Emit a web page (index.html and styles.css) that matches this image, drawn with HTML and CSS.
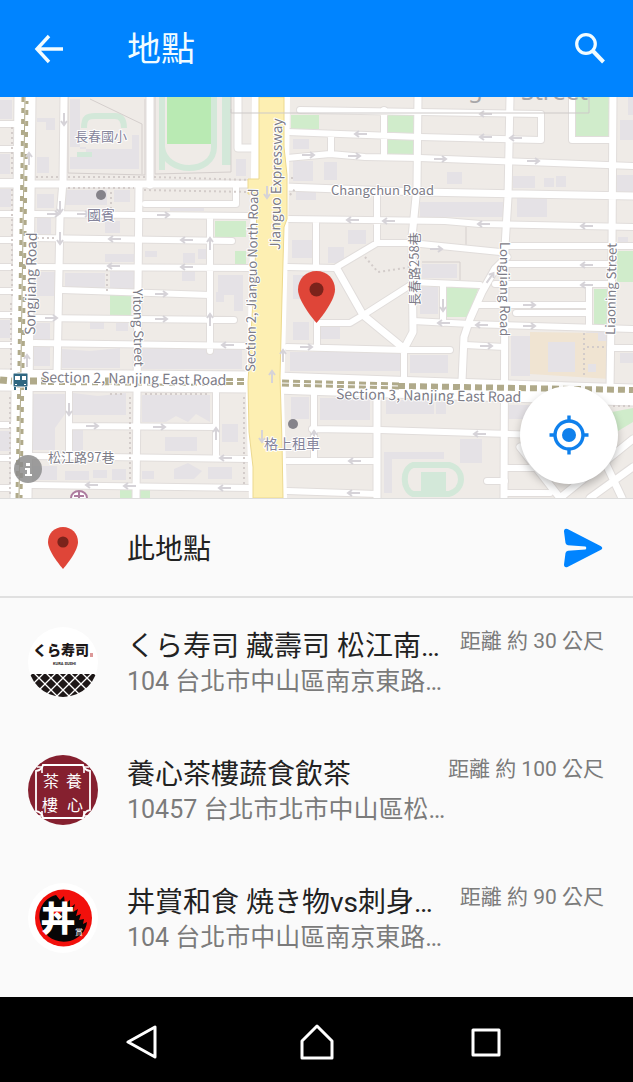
FILE: index.html
```html
<!DOCTYPE html>
<html lang="zh-Hant">
<head>
    <meta charset="UTF-8">
    <meta name="viewport" content="width=device-width, initial-scale=1.0">
    <title>地點</title>
    <link rel="stylesheet" href="styles.css">
</head>
<body>
    <header class="app-bar">
        <button class="icon-button" aria-label="返回">
            <svg width="30" height="30" viewBox="0 0 30 30" fill="none" stroke="currentColor" stroke-width="3.4"><path d="M29 15H4M15 2L3 15l12 13"/></svg>
        </button>
        <h1 class="app-title">地點</h1>
        <button class="icon-button" aria-label="搜尋">
            <svg width="30" height="32" viewBox="0 0 30 32" fill="none" stroke="currentColor"><circle cx="11" cy="11" r="9.300" stroke-width="3.200"/><path d="M17.500 17.500l11 11.500" stroke-width="4"/></svg>
        </button>
    </header>

    <section class="map">
        <svg class="map-canvas" viewBox="0 0 633 401" role="img" aria-label="地圖">
            <defs>
                <path id="roads-small" d="M0 27H14M0 52H14M0 85H14M0 117H14M0 143H14M0 170H14M0 194H14M0 218H14M0 248H14M0 328H12M0 361H12M0 391H12
                    M34 117L250 119M34 141L232 144M34 170L250 171M62 193L210 198M34 221L234 223M34 246L250 249M210 122V254
                    M145 107H236V90M69 290V357M216 296V361M69 329L216 330M32 359L250 362M31 388L250 391
                    M300 13L420 15L541 17V43M287 35L420 40L541 43M287 61L330 57L365 60L420 61L633 69M331 38V57M384 13V60
                    M287 122L445 124L480 127L633 130M377 95V146M316 124V170M287 170L335 171L377 146H411L500 155M505 149H633
                    M317 250V226H350L365 217L412 187M412 185L480 188M287 250L405 253H450M404 253V285M413 224L470 227L633 232M443 187V226
                    M572 0V43H613M507 167H612M495 187H612M478 208H586M516 216H586M589 187V230M465 248L505 250M610 251H633
                    M314 296V364M312 332L380 333L540 338M287 364H377M287 394L377 397M507 371H550M487 384H505M505 396H550"/>
                <path id="roads-medium" d="M64 0L63 85L60 120L57 278M150 0V88M139 88L136 401M238 0V51H256M0 87L250 87
                    M285 90L420 95L633 99M418 0L417 90L412 140L413 235L404 252M337 172L363 218L402 250
                    M507 160L495 172L482 195L470 222L464 240L462 284M510 0L508 100L505 150L504 401M613 0L612 150L610 292
                    M377 296V401M520 350L560 401M633 342L560 401M605 365L622 401M633 370L590 401"/>
                <path id="roads-large" d="M25 0L21 401M0 283L250 285L420 291L633 298"/>
                <path id="arrow" d="M-6 0H6M2 -3L6 0L2 3"/>
            </defs>

            <rect class="land" width="633" height="401"/>

            <!-- buildings -->
            <path class="building" d="M0 3h12v19H0zM0 57h10v20H0zM0 92h11v18H0zM37 21h18v12h-9v-8h-9zM37 60h12v16H37zM37 97h17v14H37zM37 121h14v16H37zM37 175h18v24H37z
                M70 2h10v50h52V38h7v34H70V60h16V50H70zM65 93h42v15H65zM114 93h16v12h-16zM105 124h15v12h-15zM105 157h30v8h-30zM65 176h40v17H65zM110 173h24v20h-24z
                M145 154h12v6h-12zM198 152h10v10h-10zM218 178h25v20h-25zM236 62h10v17h-10zM170 109h34v5h-34zM183 156h12v10h-12zM182 173h13v11h-13z
                M216 195h8v10h-8zM234 198h9v16h-9zM90 225h14v7H90zM116 226h12v8h-12zM62 252l28 2 30-3v20H62zM142 252l40-3 60 4v19H142zM34 226h16v43H34zM0 223h10v18H0z
                M33 297h32v20l-10 14v22H33zM73 296l25 3 28-3v22H73zM142 298h68v27l-14-8-8 8-12-6-10 6h-24zM165 340h32v14h-32zM73 332h10v22H73zM222 327h16v18h-16zM33 369h24v14H33zM65 374h24v9H65zM93 373h14v8H93zM112 372h14v11h-14zM142 374h12v8h-12zM174 372l14-6 14 8-8 8h-20zM208 370h24v12h-24zM0 334h10v20H0z
                M293 42h16v10h-16zM293 64h20v20h-20zM324 65h13v18h-13zM296 95h20v8h-20zM348 133h18v14h-18zM292 143h20v18h-20zM328 150h16v16h-16z
                M447 75h15v12h-15zM420 105h83v15h-83zM513 79h22v12h-22zM544 81h10v9h-10zM556 79h10v11h-10zM517 100h30v20h-30zM422 167h35v14h-35zM420 190h18v27h-18z
                M620 23h13v20h-13zM616 78h17v17h-17zM618 140h10v5h-10zM628 0h5v18h-5zM293 178h16v24h-16zM293 225h16v18h-16zM320 230h20v12h-20z
                M290 255h110v19H290zM410 258h38v18h-38zM511 239h19v40h-19zM586 235h22v12h-22zM620 256h13v10h-13z
                M291 300h18v22h-18zM320 301h50v22h-50zM386 303h48v14h-48zM436 305h10v12h-10zM507 308h30v14h-30zM384 355h60v7h-52v34h-8zM460 342h22v24h-22z"/>
            <path class="school" d="M530 235l68 1v8h12v38l-80-5z"/>
            <path class="building" d="M548 245h27v30h-27zM588 267h8v8h-8z"/>

            <!-- parks and running tracks -->
            <path class="park-strong" d="M167 0h47v47h-47z"/>
            <path class="park" d="M215 124h31v16h-31zM235 154h11v14h-11zM110 195h21v23h-21zM291 18h28v14h-28zM388 18h26v39h-26zM576 0h34v39h-34zM617 154h16v31h-16zM446 189h33l-10 31h-23zM594 192h14v36h-14zM612 315l21-4v14l-20 12zM120 393h30v8h-30z"/>
            <path class="pitch" d="M222 0h9v68h-9zM77 55h15v5H77zM421 375h25v19h-25z"/>
            <path class="track" d="M162 0V73M162 50C165 78 214 78 214 50V0M84 31C84 20 88 19 95 19H115C122 19 124 24 124 31"/>
            <path class="track" d="M413 368H449C465 372 465 392 449 397H413C402 392 402 372 413 368z"/>
            <path class="boundary" d="M68 0V76L145 78V2M90 2l52 25v50M155 0v77l76-2V12M466 130v20M422 165h38v18"/>

            <!-- streets: outline first, then fill -->
            <use href="#roads-small" class="road casing-small"/>
            <use href="#roads-medium" class="road casing-medium"/>
            <use href="#roads-large" class="road casing-large"/>
            <path class="road fill-express" d="M271 0L269 150L265 300L268 401"/>
            <use href="#roads-small" class="road fill-small"/>
            <use href="#roads-medium" class="road fill-medium"/>
            <use href="#roads-large" class="road fill-large"/>

            <!-- footpaths -->
            <path class="footpath" d="M36 80H60M68 80H146M154 80L250 83M68 91H134M144 93L250 95M111 95V112M12 30V78M12 92V200M11 206V276M10 300V400M130 300V385M244 300V390M107 172V194M37 141H55
                M292 80v4M290 98l5-6M365 160L378 175L412 170M584 236V280M587 250H606M613 309H633M110 297H124M145 297H210"/>

            <path class="expressway" d="M259 0H284V50L287 78V122L284 130L282 200L280 280L282 345L283 401H253V370L249 335L248 285L252 220L256 150L257 97H248V82H259z"/>

            <!-- metro lines -->
            <path class="metro-base" d="M25 0L19 401"/>
            <path class="metro-left" d="M23 0L17 401"/>
            <path class="metro-right" d="M27 4L21 401"/>
            <path class="metro-twin" d="M0 283L12 284M30 284L46 284M105 284H112M226 284.500H247M282 286L400 289"/>
            <path class="metro-gap" d="M226 284.500H247M282 286L400 289"/>
            <path class="metro-wide" d="M398 289L633 293"/>
            <path class="metro-thin" d="M48 287L226 288"/>

            <g class="arrows">
                <use href="#arrow" transform="translate(64 22) rotate(90)"/>
                <use href="#arrow" transform="translate(29 62) rotate(-90)"/>
                <use href="#arrow" transform="translate(60 110) rotate(90)"/>
                <use href="#arrow" transform="translate(60 141) rotate(90)"/>
                <use href="#arrow" transform="translate(53 117)"/>
                <use href="#arrow" transform="translate(83 117)"/>
                <use href="#arrow" transform="translate(163 118)"/>
                <use href="#arrow" transform="translate(115 142) rotate(180)"/>
                <use href="#arrow" transform="translate(187 143) rotate(180)"/>
                <use href="#arrow" transform="translate(114 169) rotate(180)"/>
                <use href="#arrow" transform="translate(187 170) rotate(180)"/>
                <use href="#arrow" transform="translate(210 147) rotate(-90)"/>
                <use href="#arrow" transform="translate(161 197)"/>
                <use href="#arrow" transform="translate(51 221)"/>
                <use href="#arrow" transform="translate(161 222)"/>
                <use href="#arrow" transform="translate(210 223) rotate(-90)"/>
                <use href="#arrow" transform="translate(228 248) rotate(180)"/>
                <use href="#arrow" transform="translate(27 264) rotate(-90)"/>
                <use href="#arrow" transform="translate(69 312) rotate(90)"/>
                <use href="#arrow" transform="translate(92 329)"/>
                <use href="#arrow" transform="translate(159 330)"/>
                <use href="#arrow" transform="translate(216 337) rotate(-90)"/>
                <use href="#arrow" transform="translate(226 361) rotate(180)"/>
                <use href="#arrow" transform="translate(92 388) rotate(180)"/>
                <use href="#arrow" transform="translate(130 389) rotate(180)"/>
                <use href="#arrow" transform="translate(225 391) rotate(180)"/>
                <use href="#arrow" transform="translate(267 95) rotate(90)"/>
                <use href="#arrow" transform="translate(272 280) rotate(-90)"/>
                <use href="#arrow" transform="translate(262 339) rotate(90)"/>
                <use href="#arrow" transform="translate(283 259) rotate(-90)"/>
                <use href="#arrow" transform="translate(361 37) rotate(180)"/>
                <use href="#arrow" transform="translate(308 58)"/>
                <use href="#arrow" transform="translate(354 59)"/>
                <use href="#arrow" transform="translate(353 123) rotate(180)"/>
                <use href="#arrow" transform="translate(389 124) rotate(180)"/>
                <use href="#arrow" transform="translate(486 17) rotate(180)"/>
                <use href="#arrow" transform="translate(486 40) rotate(180)"/>
                <use href="#arrow" transform="translate(516 41) rotate(180)"/>
                <use href="#arrow" transform="translate(440 62)"/>
                <use href="#arrow" transform="translate(533 64)"/>
                <use href="#arrow" transform="translate(484 127) rotate(180)"/>
                <use href="#arrow" transform="translate(587 129) rotate(180)"/>
                <use href="#arrow" transform="translate(436 152)"/>
                <use href="#arrow" transform="translate(587 168) rotate(180)"/>
                <use href="#arrow" transform="translate(587 188) rotate(180)"/>
                <use href="#arrow" transform="translate(490 181) rotate(-55)"/>
                <use href="#arrow" transform="translate(529 208)"/>
                <use href="#arrow" transform="translate(529 229)"/>
                <use href="#arrow" transform="translate(443 208) rotate(90)"/>
                <use href="#arrow" transform="translate(444 226) rotate(180)"/>
                <use href="#arrow" transform="translate(482 228) rotate(180)"/>
                <use href="#arrow" transform="translate(486 249)"/>
                <use href="#arrow" transform="translate(306 250)"/>
                <use href="#arrow" transform="translate(314 340) rotate(-90)"/>
                <use href="#arrow" transform="translate(355 364) rotate(180)"/>
                <use href="#arrow" transform="translate(354 396) rotate(180)"/>
                <use href="#arrow" transform="translate(480 337) rotate(180)"/>
            </g>

            <!-- street label cut off by the top edge -->
            <path class="label-frame" d="M231 0V16H589V0"/>
            <g class="label-cut">
                <text x="468" y="0">g</text>
                <text x="521" y="3">Street</text>
            </g>

            <g class="labels">
                <text class="label-small" x="331" y="98">Changchun Road</text>
                <text transform="translate(41 285) rotate(1)">Section 2, Nanjing East Road</text>
                <text transform="translate(336 302) rotate(1)">Section 3, Nanjing East Road</text>
                <text transform="translate(35 238) rotate(-89)">Songjiang Road</text>
                <text class="label-small" transform="translate(133 192) rotate(89)">Yitong Street</text>
                <text class="label-small" transform="translate(255 275) rotate(-89)">Section 2, Jianguo North Road</text>
                <text transform="translate(280 153) rotate(-89)">Jianguo Expressway</text>
                <text class="label-small" transform="translate(500 145) rotate(90)">Longjiang Road</text>
                <text class="label-small" transform="translate(615 238) rotate(-89)">Liaoning Street</text>
                <text class="label-small" transform="translate(419 209) rotate(-90)">長春路258巷</text>
                <text class="label-small" x="48" y="365">松江路97巷</text>
                <text class="label-place label-small" x="75" y="44">長春國小</text>
                <text class="label-place" x="87" y="123">國賓</text>
                <text class="label-place" x="264" y="352">格上租車</text>
            </g>
            <circle class="poi" cx="101" cy="98" r="5"/>
            <circle class="poi" cx="293" cy="327" r="5"/>

            <!-- metro station -->
            <rect class="station" x="13" y="276" width="15" height="14" rx="1"/>
            <path class="station-window" d="M15 279h5v4h-5zM22 279h4v4h-4zM15 287h2v1h-2zM24 287h2v1h-2z"/>
            <path class="station-legs" d="M15 290v3M26 290v3"/>
            <path class="landmark" d="M71 401a8 7 0 0 1 16 0M74 399h10M79 395v6"/>

            <circle class="info-disc" cx="28" cy="372" r="14"/>
            <path class="info-mark" d="M26 366h4v3h-4zM25 371h5v6h2v2h-7v-2h2v-4h-2z"/>

            <path class="pin" d="M316.500 174C306 174 298 182 298 192.500C298 205 316.500 226 316.500 226S335 205 335 192.500C335 182 327 174 316.500 174z"/>
            <circle class="pin-hole" cx="316.500" cy="192.500" r="7"/>
        </svg>
        <button class="locate-button" aria-label="我的位置">
            <svg width="40" height="40" viewBox="0 0 40 40" fill="none" stroke="currentColor"><circle cx="20" cy="20" r="14" stroke-width="3.4"/><circle cx="20" cy="20" r="7" fill="currentColor" stroke="none"/><path d="M20 0.500v5M20 34.500v5M0.500 20h5M34.500 20h5" stroke-width="3.400"/></svg>
        </button>
    </section>

    <section class="current-place">
        <div class="place-icon">
            <svg width="30" height="42" viewBox="0 0 30 42"><path class="pin" d="M15 0C6.500 0 0 6.500 0 15C0 25 15 42 15 42S30 25 30 15C30 6.500 23.500 0 15 0z"/><circle class="pin-hole" cx="15" cy="15" r="5.600"/></svg>
        </div>
        <h2 class="place-name">此地點</h2>
        <button class="send-button" aria-label="傳送">
            <svg width="40" height="40" viewBox="0 0 40 40" fill="currentColor"><path d="M4.500 1L38 18.200Q40.500 20 38 21.800L4.500 39Q1 40 1 36.500L2.500 25Q3 23 5 22.800L22.500 21.500Q24 20 22.500 18.600L5 17.200Q3 17 2.500 15L1 3.500Q1 0 4.500 1z"/></svg>
        </button>
    </section>

    <ul class="place-list">
        <li class="place">
            <svg class="place-logo" viewBox="0 0 70 70">
                <defs>
                    <clipPath id="logo-round"><circle cx="35" cy="35" r="35"/></clipPath>
                    <pattern id="lattice" width="12" height="12" patternUnits="userSpaceOnUse" x="5" y="45"><rect width="12" height="12" fill="#1d1717"/><path d="M-1 -1L13 13M13 -1L-1 13" stroke="#fff" stroke-width="1.300"/></pattern>
                </defs>
                <g clip-path="url(#logo-round)">
                    <rect width="70" height="70" fill="#fff"/>
                    <rect y="47" width="70" height="23" fill="url(#lattice)"/>
                </g>
                <text class="logo-kura" x="5" y="28">くら寿司</text>
                <text class="logo-kura-small" x="25" y="38">KURA SUSHI</text>
                <rect x="62" y="26" width="3" height="4" fill="#d99"/>
            </svg>
            <div class="place-text">
                <h3 class="place-name">くら寿司 藏壽司 松江南…</h3>
                <p class="place-address">104 台北市中山區南京東路…</p>
            </div>
            <span class="place-distance">距離 約 30 公尺</span>
        </li>
        <li class="place">
            <svg class="place-logo" viewBox="0 0 70 70">
                <circle cx="35" cy="35" r="35" fill="#85202f"/>
                <path d="M15 10H55Q56 15 62 16V55Q56 56 55 63H15Q14 57 8 56V16Q14 15 15 10z" fill="none" stroke="#fff" stroke-width="1.800"/>
                <path d="M9 12h5v6M61 12h-5v6M9 61h5v-5M61 61h-5v-5" fill="none" stroke="#fff" stroke-width="1.600"/>
                <g class="logo-seal">
                    <text x="15" y="32">茶</text>
                    <text x="38" y="32">養</text>
                    <text x="14" y="56">樓</text>
                    <text x="39" y="56">心</text>
                </g>
            </svg>
            <div class="place-text">
                <h3 class="place-name">養心茶樓蔬食飲茶</h3>
                <p class="place-address">10457 台北市北市中山區松…</p>
            </div>
            <span class="place-distance">距離 約 100 公尺</span>
        </li>
        <li class="place">
            <svg class="place-logo" viewBox="0 0 70 70">
                <circle cx="35" cy="35" r="35" fill="#fff"/>
                <circle cx="35.500" cy="35" r="28.500" fill="#f2100c"/>
                <path d="M28 12C14 16 10 28 12 38C15 54 28 61 42 58C52 55 58 48 59 39L55 41L56 36L51 37L53 31L48 33L50 26L45 29L47 21L42 25L42 17L37 21L36 13L32 17z" fill="#080606"/>
                <path d="M24 29q6-6 9-3t-5 8z" fill="#f2100c"/>
                <text class="logo-don" x="13" y="48">丼</text>
                <text class="logo-don-small" x="47" y="52">賞</text>
            </svg>
            <div class="place-text">
                <h3 class="place-name">丼賞和食 焼き物vs刺身…</h3>
                <p class="place-address">104 台北市中山區南京東路…</p>
            </div>
            <span class="place-distance">距離 約 90 公尺</span>
        </li>
    </ul>

    <nav class="system-bar">
        <button class="system-button" aria-label="返回">
            <svg width="44" height="36" viewBox="0 0 44 36"><path d="M29 3V33L2 18z"/></svg>
        </button>
        <button class="system-button" aria-label="首頁">
            <svg width="34" height="36" viewBox="0 0 34 36"><path d="M17 2L32 17V34H2V17z"/></svg>
        </button>
        <button class="system-button" aria-label="最近使用">
            <svg width="34" height="36" viewBox="0 0 34 36"><path d="M4 6H30V31H4z"/></svg>
        </button>
    </nav>
</body>
</html>
```
FILE: styles.css
```css
* {
    margin: 0;
    padding: 0;
    box-sizing: border-box;
}

body {
    min-height: 100vh;
    display: flex;
    flex-direction: column;
    background: #fafafa;
    color: #222;
    font-family: Roboto, 'Noto Sans CJK TC', sans-serif;
}

button {
    display: flex;
    align-items: center;
    justify-content: center;
    border: none;
    background: none;
    color: inherit;
    cursor: pointer;
}

svg {
    display: block;
}

h1, h2, h3 {
    font-weight: 400;
}

/* top bar */
.app-bar {
    display: flex;
    align-items: center;
    height: 97px;
    padding: 0 20px;
    background: #0084ff;
    color: #f2fcff;
}

.icon-button {
    width: 58px;
    height: 58px;
}

.icon-button:last-child {
    margin-right: -6px;
}

.app-title {
    flex: 1;
    padding-left: 49px;
    font-size: 34px;
    line-height: 48px;
}

/* map */
.map {
    position: relative;
    border-bottom: 1px solid #ddd;
    overflow: hidden;
}

.map-canvas {
    width: 100%;
    height: auto;
}

.land { fill: #efebe7; }
.building { fill: #e5e2e6; }
.school { fill: #f0e4d2; }
.park { fill: #d0eccb; }
.park-strong { fill: #b9eab3; }
.pitch { fill: #d3e8d9; }

.track {
    fill: none;
    stroke: #d3e8d9;
    stroke-width: 6;
}

.boundary {
    fill: none;
    stroke: #d5cfcd;
    stroke-width: 1;
}

.road {
    fill: none;
    stroke: #fff;
    stroke-linejoin: round;
    stroke-linecap: round;
}

.casing-small, .casing-medium, .casing-large { stroke: #e1dddb; }
.casing-small { stroke-width: 8; }
.casing-medium { stroke-width: 9; }
.casing-large { stroke-width: 23; }
.fill-small { stroke-width: 6; }
.fill-medium { stroke-width: 7; }
.fill-large { stroke-width: 21; }
.fill-express { stroke-width: 38; }

.footpath {
    fill: none;
    stroke: #d3ccca;
    stroke-width: 2;
    stroke-dasharray: 2 3;
}

.expressway {
    fill: #fdefb2;
    stroke: #ecd98f;
    stroke-width: 1;
}

.metro-base, .metro-left, .metro-right, .metro-twin, .metro-gap, .metro-wide, .metro-thin {
    fill: none;
    stroke: #b0aa8a;
}

.metro-base { stroke-width: 1; }
.metro-left, .metro-right { stroke-width: 3; stroke-dasharray: 5 6; }
.metro-right { stroke-dashoffset: 2; }
.metro-twin { stroke-width: 7; stroke-dasharray: 7 4; }
.metro-gap { stroke: #fff; stroke-width: 1; }
.metro-wide { stroke-width: 6; stroke-dasharray: 7 4; }
.metro-thin { stroke-width: 2; stroke-dasharray: 6 5; }

.arrows {
    fill: none;
    stroke: #d6d3d8;
    stroke-width: 2;
}

.labels {
    fill: #7d7c87;
    stroke: #fff;
    stroke-width: 2;
    stroke-linejoin: round;
    paint-order: stroke;
    font-family: 'Noto Sans CJK TC', sans-serif;
    font-size: 14px;
}

.label-place { fill: #85849b; }
.label-small { font-size: 13px; }

.label-frame {
    fill: none;
    stroke: #cdc9c8;
    stroke-width: 1;
}

.label-cut {
    fill: #a8a6a8;
    font-family: 'Noto Sans', sans-serif;
    font-size: 24px;
}

.poi { fill: #85838a; }
.station { fill: #2f6781; stroke: #fff; stroke-width: 1; }
.station-window { fill: #fff; }
.station-legs { stroke: #2f6781; stroke-width: 2; }
.landmark { fill: #fff; stroke: #ad7c9f; stroke-width: 2; }
.info-disc { fill: #8d8d8d; fill-opacity: 0.85; }
.info-mark { fill: #fff; }
.pin { fill: #df4538; }
.pin-hole { fill: #7b231b; }

.locate-button {
    position: absolute;
    right: 15px;
    bottom: 14px;
    width: 98px;
    height: 98px;
    border-radius: 50%;
    background: #fff;
    color: #0f80ec;
    box-shadow: 0 4px 8px rgba(0, 0, 0, 0.25);
}

/* selected place */
.current-place {
    display: flex;
    align-items: center;
    height: 99px;
    padding: 0 30px 0 28px;
    border-bottom: 2px solid #e0e0e0;
}

.place-icon {
    display: flex;
    justify-content: center;
    width: 70px;
    margin-right: 29px;
}

.current-place .place-name {
    flex: 1;
    padding-top: 4px;
}

.send-button {
    color: #0084ff;
}

/* nearby places */
.place-list {
    flex: 1;
    list-style: none;
}

.place {
    display: flex;
    align-items: center;
    height: 128px;
    padding: 0 29px 0 28px;
}

.place-logo {
    flex: none;
    width: 70px;
    height: 70px;
    margin-right: 29px;
}

.place-text {
    flex: 1;
    min-width: 0;
    padding-top: 4px;
}

.place-name {
    font-size: 28px;
    line-height: 36px;
    white-space: nowrap;
}

.place-address {
    color: #7b7b7b;
    font-size: 25px;
    line-height: 34px;
    white-space: nowrap;
}

.place-distance {
    align-self: flex-start;
    padding-top: 27px;
    color: #7b7b7b;
    font-size: 21px;
    line-height: 32px;
    white-space: nowrap;
}

.logo-kura {
    fill: #1d1717;
    font: 900 14px 'Noto Sans CJK JP', sans-serif;
}

.logo-kura-small {
    fill: #1d1717;
    font: 700 4px Roboto, sans-serif;
}

.logo-seal {
    fill: #fff;
    font: 400 16px 'Noto Sans CJK TC', sans-serif;
}

.logo-don {
    fill: #fff;
    font: 900 34px 'Noto Sans CJK TC', sans-serif;
}

.logo-don-small {
    fill: #fff;
    font: 400 8px 'Noto Sans CJK TC', sans-serif;
}

/* android navigation */
.system-bar {
    display: flex;
    justify-content: center;
    align-items: center;
    height: 85px;
    padding: 5px 0 0;
    background: #000;
    color: #fff;
}

.system-button {
    width: 169px;
    height: 60px;
}

.system-button svg {
    fill: none;
    stroke: currentColor;
    stroke-width: 3;
    stroke-linejoin: round;
}
```
